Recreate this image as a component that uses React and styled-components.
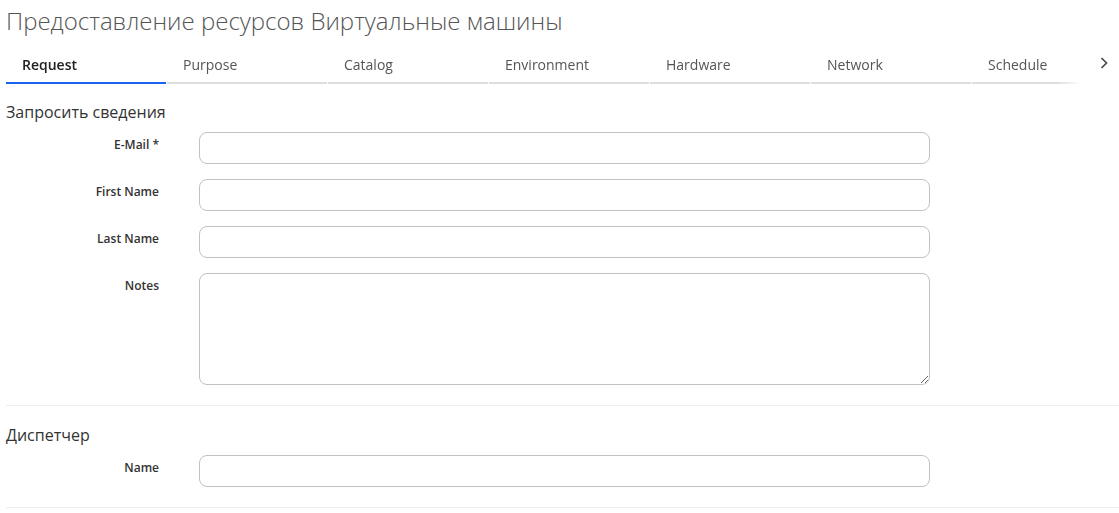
import React from 'react';
import styled, { createGlobalStyle } from 'styled-components';

const GlobalStyle = createGlobalStyle`
  body {
    margin: 0;
    background: #fff;
    font-family: "Open Sans", "Liberation Sans", sans-serif;
    color: #333;
  }
`;

const TABS = ['Request', 'Purpose', 'Catalog', 'Environment', 'Hardware', 'Network', 'Schedule'];

const Page = styled.div`
  padding: 6px 0 0 6px;
`;

const Title = styled.h1`
  margin: 0;
  font-size: 24px;
  line-height: 30px;
  font-weight: 300;
  color: #555;
`;

const TabBar = styled.div`
  display: flex;
  align-items: center;
  margin-top: 10px;
`;

const TabScroller = styled.div`
  display: flex;
  width: 1076px;
  overflow: hidden;
  -webkit-mask-image: linear-gradient(to right, #000 1050px, transparent 1076px);
  mask-image: linear-gradient(to right, #000 1050px, transparent 1076px);
`;

const Tab = styled.div`
  flex: 0 0 160px;
  margin-right: 1px;
  height: 38px;
  padding-left: 16px;
  display: flex;
  align-items: center;
  box-sizing: border-box;
  font-size: 14px;
  font-weight: ${p => (p.$active ? 600 : 400)};
  color: ${p => (p.$active ? '#222' : '#555')};
  border-bottom: 2px solid ${p => (p.$active ? '#1a62f0' : '#ddd')};
`;

const ArrowButton = styled.button`
  border: none;
  background: none;
  padding: 0;
  margin: 0 0 4px 14px;
  width: 16px;
  height: 24px;
  display: flex;
  align-items: center;
  justify-content: center;
  color: #444;
`;

const Section = styled.section`
  border-bottom: 1px solid #eee;
  padding-bottom: 20px;
  margin-top: ${p => p.$top}px;
`;

const SectionTitle = styled.h2`
  margin: 0 0 9px;
  font-size: 16px;
  line-height: 22px;
  font-weight: 400;
  color: #333;
`;

const Fields = styled.div`
  display: flex;
  flex-direction: column;
  gap: 15px;
`;

const Row = styled.div`
  display: grid;
  grid-template-columns: 153px 731px;
  column-gap: 40px;
  align-items: start;
`;

const Label = styled.label`
  text-align: right;
  font-size: 12px;
  line-height: 16px;
  font-weight: 600;
  color: #333;
  padding-top: 5px;
`;

const Input = styled.input`
  box-sizing: border-box;
  width: 100%;
  height: 32px;
  border: 1px solid #c2c2c2;
  border-radius: 8px;
  background: #fff;
  padding: 0 10px;
  font: inherit;
  outline: none;
`;

const TextArea = styled.textarea`
  box-sizing: border-box;
  width: 100%;
  height: 112px;
  border: 1px solid #c2c2c2;
  border-radius: 8px;
  background: #fff;
  padding: 6px 10px;
  font: inherit;
  outline: none;
  display: block;
`;

const Chevron = () => (
  <svg width="8" height="12" viewBox="0 0 8 12" fill="none">
    <path d="M1.5 1 L6.5 6 L1.5 11" stroke="currentColor" strokeWidth="1.6" />
  </svg>
);

export default function App() {
  return (
    <Page>
      <GlobalStyle />
      <Title>Предоставление ресурсов Виртуальные машины</Title>
      <TabBar>
        <TabScroller>
          {TABS.map((t, i) => (
            <Tab key={t} $active={i === 0}>{t}</Tab>
          ))}
        </TabScroller>
        <ArrowButton aria-label="next"><Chevron /></ArrowButton>
      </TabBar>

      <Section $top={17}>
        <SectionTitle>Запросить сведения</SectionTitle>
        <Fields>
          <Row>
            <Label>E-Mail *</Label>
            <Input type="text" />
          </Row>
          <Row>
            <Label>First Name</Label>
            <Input type="text" />
          </Row>
          <Row>
            <Label>Last Name</Label>
            <Input type="text" />
          </Row>
          <Row>
            <Label>Notes</Label>
            <TextArea />
          </Row>
        </Fields>
      </Section>

      <Section $top={18}>
        <SectionTitle>Диспетчер</SectionTitle>
        <Fields>
          <Row>
            <Label>Name</Label>
            <Input type="text" />
          </Row>
        </Fields>
      </Section>
    </Page>
  );
}
